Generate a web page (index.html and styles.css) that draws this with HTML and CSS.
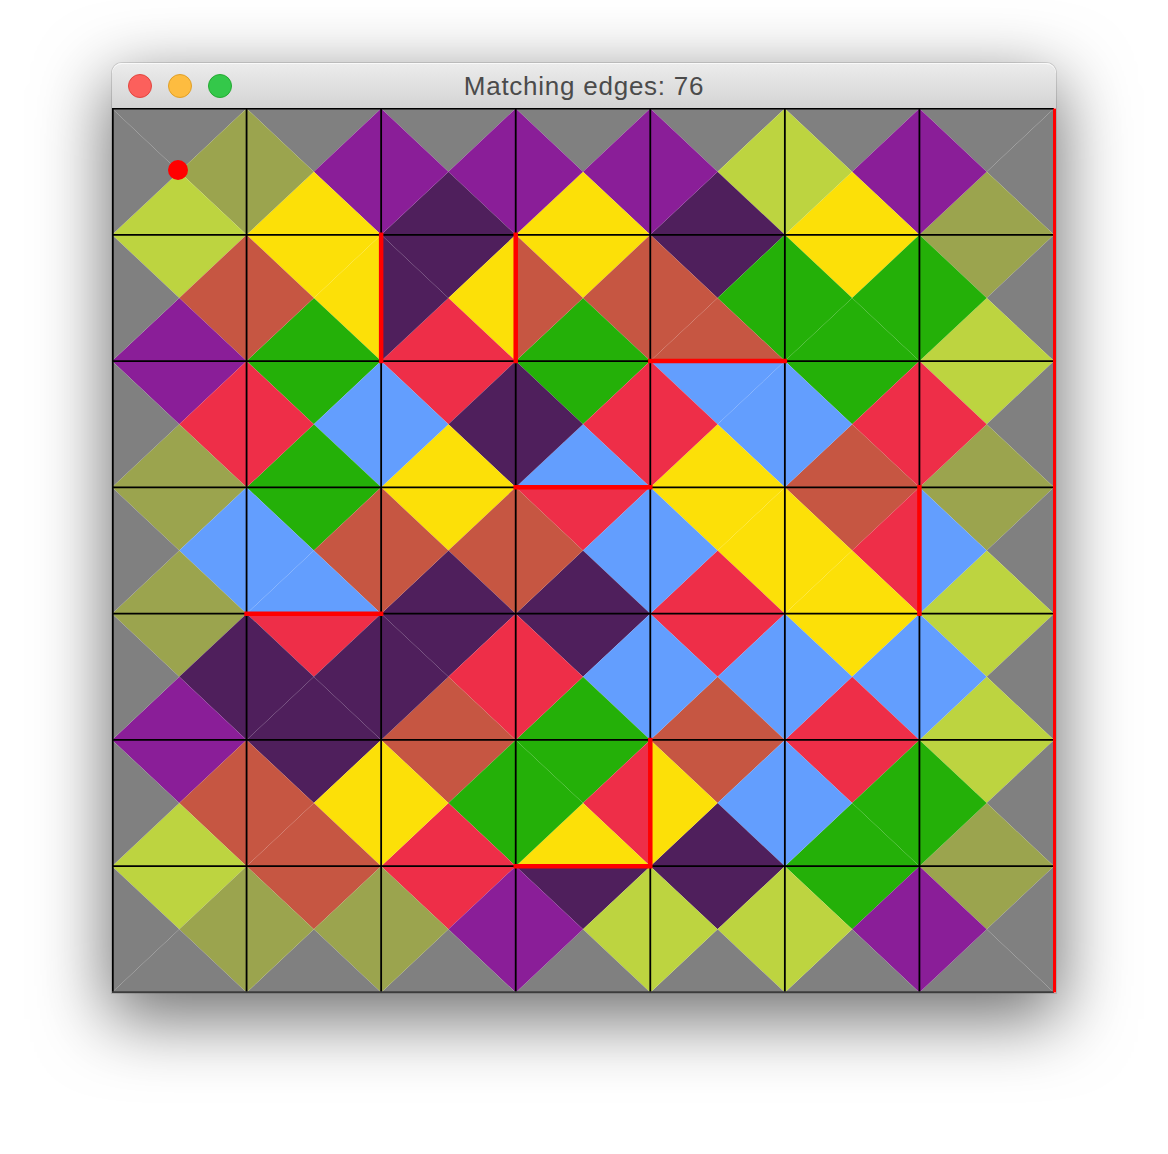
FILE: index.html
```html
<!DOCTYPE html>
<html>
<head>
<meta charset="utf-8">
<title>Matching edges: 76</title>
<link rel="stylesheet" href="styles.css">
</head>
<body>
<div class="stage">
  <div class="window">
    <div class="titlebar">
      <div class="lights">
        <span class="light close"></span>
        <span class="light min"></span>
        <span class="light max"></span>
      </div>
      <div class="title">Matching edges: 76</div>
      <div class="spacer"></div>
    </div>
    <svg class="board" width="944" height="885" viewBox="0 0 944 885">
      <defs>
        <polygon id="tT" points="0,0 134.571,0 67.286,63.143"/>
        <polygon id="tR" points="134.571,0 134.571,126.286 67.286,63.143"/>
        <polygon id="tB" points="0,126.286 134.571,126.286 67.286,63.143"/>
        <polygon id="tL" points="0,0 0,126.286 67.286,63.143"/>
      </defs>
      <g transform="translate(0 0.5)">
        <!-- row 0 -->
        <g transform="translate(0 0)"><use href="#tT" class="gy"/><use href="#tR" class="ol"/><use href="#tB" class="li"/><use href="#tL" class="gy"/></g>
        <g transform="translate(134.571 0)"><use href="#tT" class="gy"/><use href="#tR" class="pu"/><use href="#tB" class="ye"/><use href="#tL" class="ol"/></g>
        <g transform="translate(269.143 0)"><use href="#tT" class="gy"/><use href="#tR" class="pu"/><use href="#tB" class="dp"/><use href="#tL" class="pu"/></g>
        <g transform="translate(403.714 0)"><use href="#tT" class="gy"/><use href="#tR" class="pu"/><use href="#tB" class="ye"/><use href="#tL" class="pu"/></g>
        <g transform="translate(538.286 0)"><use href="#tT" class="gy"/><use href="#tR" class="li"/><use href="#tB" class="dp"/><use href="#tL" class="pu"/></g>
        <g transform="translate(672.857 0)"><use href="#tT" class="gy"/><use href="#tR" class="pu"/><use href="#tB" class="ye"/><use href="#tL" class="li"/></g>
        <g transform="translate(807.429 0)"><use href="#tT" class="gy"/><use href="#tR" class="gy"/><use href="#tB" class="ol"/><use href="#tL" class="pu"/></g>
        <!-- row 1 -->
        <g transform="translate(0 126.286)"><use href="#tT" class="li"/><use href="#tR" class="br"/><use href="#tB" class="pu"/><use href="#tL" class="gy"/></g>
        <g transform="translate(134.571 126.286)"><use href="#tT" class="ye"/><use href="#tR" class="ye"/><use href="#tB" class="gr"/><use href="#tL" class="br"/></g>
        <g transform="translate(269.143 126.286)"><use href="#tT" class="dp"/><use href="#tR" class="ye"/><use href="#tB" class="rd"/><use href="#tL" class="dp"/></g>
        <g transform="translate(403.714 126.286)"><use href="#tT" class="ye"/><use href="#tR" class="br"/><use href="#tB" class="gr"/><use href="#tL" class="br"/></g>
        <g transform="translate(538.286 126.286)"><use href="#tT" class="dp"/><use href="#tR" class="gr"/><use href="#tB" class="br"/><use href="#tL" class="br"/></g>
        <g transform="translate(672.857 126.286)"><use href="#tT" class="ye"/><use href="#tR" class="gr"/><use href="#tB" class="gr"/><use href="#tL" class="gr"/></g>
        <g transform="translate(807.429 126.286)"><use href="#tT" class="ol"/><use href="#tR" class="gy"/><use href="#tB" class="li"/><use href="#tL" class="gr"/></g>
        <!-- row 2 -->
        <g transform="translate(0 252.571)"><use href="#tT" class="pu"/><use href="#tR" class="rd"/><use href="#tB" class="ol"/><use href="#tL" class="gy"/></g>
        <g transform="translate(134.571 252.571)"><use href="#tT" class="gr"/><use href="#tR" class="bl"/><use href="#tB" class="gr"/><use href="#tL" class="rd"/></g>
        <g transform="translate(269.143 252.571)"><use href="#tT" class="rd"/><use href="#tR" class="dp"/><use href="#tB" class="ye"/><use href="#tL" class="bl"/></g>
        <g transform="translate(403.714 252.571)"><use href="#tT" class="gr"/><use href="#tR" class="rd"/><use href="#tB" class="bl"/><use href="#tL" class="dp"/></g>
        <g transform="translate(538.286 252.571)"><use href="#tT" class="bl"/><use href="#tR" class="bl"/><use href="#tB" class="ye"/><use href="#tL" class="rd"/></g>
        <g transform="translate(672.857 252.571)"><use href="#tT" class="gr"/><use href="#tR" class="rd"/><use href="#tB" class="br"/><use href="#tL" class="bl"/></g>
        <g transform="translate(807.429 252.571)"><use href="#tT" class="li"/><use href="#tR" class="gy"/><use href="#tB" class="ol"/><use href="#tL" class="rd"/></g>
        <!-- row 3 -->
        <g transform="translate(0 378.857)"><use href="#tT" class="ol"/><use href="#tR" class="bl"/><use href="#tB" class="ol"/><use href="#tL" class="gy"/></g>
        <g transform="translate(134.571 378.857)"><use href="#tT" class="gr"/><use href="#tR" class="br"/><use href="#tB" class="bl"/><use href="#tL" class="bl"/></g>
        <g transform="translate(269.143 378.857)"><use href="#tT" class="ye"/><use href="#tR" class="br"/><use href="#tB" class="dp"/><use href="#tL" class="br"/></g>
        <g transform="translate(403.714 378.857)"><use href="#tT" class="rd"/><use href="#tR" class="bl"/><use href="#tB" class="dp"/><use href="#tL" class="br"/></g>
        <g transform="translate(538.286 378.857)"><use href="#tT" class="ye"/><use href="#tR" class="ye"/><use href="#tB" class="rd"/><use href="#tL" class="bl"/></g>
        <g transform="translate(672.857 378.857)"><use href="#tT" class="br"/><use href="#tR" class="rd"/><use href="#tB" class="ye"/><use href="#tL" class="ye"/></g>
        <g transform="translate(807.429 378.857)"><use href="#tT" class="ol"/><use href="#tR" class="gy"/><use href="#tB" class="li"/><use href="#tL" class="bl"/></g>
        <!-- row 4 -->
        <g transform="translate(0 505.143)"><use href="#tT" class="ol"/><use href="#tR" class="dp"/><use href="#tB" class="pu"/><use href="#tL" class="gy"/></g>
        <g transform="translate(134.571 505.143)"><use href="#tT" class="rd"/><use href="#tR" class="dp"/><use href="#tB" class="dp"/><use href="#tL" class="dp"/></g>
        <g transform="translate(269.143 505.143)"><use href="#tT" class="dp"/><use href="#tR" class="rd"/><use href="#tB" class="br"/><use href="#tL" class="dp"/></g>
        <g transform="translate(403.714 505.143)"><use href="#tT" class="dp"/><use href="#tR" class="bl"/><use href="#tB" class="gr"/><use href="#tL" class="rd"/></g>
        <g transform="translate(538.286 505.143)"><use href="#tT" class="rd"/><use href="#tR" class="bl"/><use href="#tB" class="br"/><use href="#tL" class="bl"/></g>
        <g transform="translate(672.857 505.143)"><use href="#tT" class="ye"/><use href="#tR" class="bl"/><use href="#tB" class="rd"/><use href="#tL" class="bl"/></g>
        <g transform="translate(807.429 505.143)"><use href="#tT" class="li"/><use href="#tR" class="gy"/><use href="#tB" class="li"/><use href="#tL" class="bl"/></g>
        <!-- row 5 -->
        <g transform="translate(0 631.429)"><use href="#tT" class="pu"/><use href="#tR" class="br"/><use href="#tB" class="li"/><use href="#tL" class="gy"/></g>
        <g transform="translate(134.571 631.429)"><use href="#tT" class="dp"/><use href="#tR" class="ye"/><use href="#tB" class="br"/><use href="#tL" class="br"/></g>
        <g transform="translate(269.143 631.429)"><use href="#tT" class="br"/><use href="#tR" class="gr"/><use href="#tB" class="rd"/><use href="#tL" class="ye"/></g>
        <g transform="translate(403.714 631.429)"><use href="#tT" class="gr"/><use href="#tR" class="rd"/><use href="#tB" class="ye"/><use href="#tL" class="gr"/></g>
        <g transform="translate(538.286 631.429)"><use href="#tT" class="br"/><use href="#tR" class="bl"/><use href="#tB" class="dp"/><use href="#tL" class="ye"/></g>
        <g transform="translate(672.857 631.429)"><use href="#tT" class="rd"/><use href="#tR" class="gr"/><use href="#tB" class="gr"/><use href="#tL" class="bl"/></g>
        <g transform="translate(807.429 631.429)"><use href="#tT" class="li"/><use href="#tR" class="gy"/><use href="#tB" class="ol"/><use href="#tL" class="gr"/></g>
        <!-- row 6 -->
        <g transform="translate(0 757.714)"><use href="#tT" class="li"/><use href="#tR" class="ol"/><use href="#tB" class="gy"/><use href="#tL" class="gy"/></g>
        <g transform="translate(134.571 757.714)"><use href="#tT" class="br"/><use href="#tR" class="ol"/><use href="#tB" class="gy"/><use href="#tL" class="ol"/></g>
        <g transform="translate(269.143 757.714)"><use href="#tT" class="rd"/><use href="#tR" class="pu"/><use href="#tB" class="gy"/><use href="#tL" class="ol"/></g>
        <g transform="translate(403.714 757.714)"><use href="#tT" class="dp"/><use href="#tR" class="li"/><use href="#tB" class="gy"/><use href="#tL" class="pu"/></g>
        <g transform="translate(538.286 757.714)"><use href="#tT" class="dp"/><use href="#tR" class="li"/><use href="#tB" class="gy"/><use href="#tL" class="li"/></g>
        <g transform="translate(672.857 757.714)"><use href="#tT" class="gr"/><use href="#tR" class="pu"/><use href="#tB" class="gy"/><use href="#tL" class="li"/></g>
        <g transform="translate(807.429 757.714)"><use href="#tT" class="ol"/><use href="#tR" class="gy"/><use href="#tB" class="gy"/><use href="#tL" class="pu"/></g>

        <path class="gridlines" d="M0.8 0V884 M134.571 0V884 M269.143 0V884 M403.714 0V884 M538.286 0V884 M672.857 0V884 M807.429 0V884 M0 0H942 M0 126.286H942 M0 252.571H942 M0 378.857H942 M0 505.143H942 M0 631.429H942 M0 757.714H942"/>
        <path class="bottomline" d="M0 883.6H942"/>
        <path class="mismatch" d="M269.143 126.286V252.571 M403.714 126.286V252.571 M538.286 252.571H672.857 M403.714 378.857H538.286 M807.429 378.857V505.143 M134.571 505.143H269.143 M538.286 631.429V757.714 M403.714 757.714H538.286"/>
        <path class="edge" d="M942.5 0V884"/>
        <circle class="cursor" cx="66" cy="61.5" r="10"/>
      </g>
    </svg>
  </div>
</div>
</body>
</html>
```
FILE: styles.css
```css
html, body {
  margin: 0;
  padding: 0;
  background: #ffffff;
}

.stage {
  padding: 63px 0 0 112px;
  width: 1168px;
  height: 1154px;
  box-sizing: border-box;
  overflow: hidden;
}

.window {
  width: 944px;
  height: 930px;
  border-radius: 10px 10px 0 0;
  background: #ffffff;
  box-shadow: 0 22px 70px 4px rgba(0, 0, 0, 0.56), 0 0 0 1px rgba(0, 0, 0, 0.12);
  display: flex;
  flex-direction: column;
}

.titlebar {
  height: 45px;
  flex: 0 0 45px;
  display: grid;
  grid-template-columns: 1fr auto 1fr;
  align-items: center;
  background: linear-gradient(#ececec, #d4d4d4);
  border-radius: 10px 10px 0 0;
  box-shadow: inset 0 1px 0 rgba(255, 255, 255, 0.7);
}

.lights {
  display: flex;
  gap: 16px;
  padding-left: 16px;
  padding-top: 1px;
}

.light {
  width: 24px;
  height: 24px;
  border-radius: 50%;
  box-sizing: border-box;
}

.light.close {
  background: #fc605c;
  border: 1px solid #e2463f;
}

.light.min {
  background: #fdbc40;
  border: 1px solid #e0a028;
}

.light.max {
  background: #34c84a;
  border: 1px solid #25aa33;
}

.title {
  font-family: "Liberation Sans", Arial, sans-serif;
  font-size: 26px;
  letter-spacing: 0.75px;
  color: #4b4b4b;
  padding-top: 1px;
}

.board {
  display: block;
}

.gy { fill: #808080; }
.ol { fill: #9ba44e; }
.li { fill: #bdd440; }
.pu { fill: #8a1e98; }
.dp { fill: #4f1f5c; }
.ye { fill: #fce008; }
.br { fill: #c65642; }
.gr { fill: #24b008; }
.bl { fill: #639efe; }
.rd { fill: #ee2e48; }

.gridlines {
  fill: none;
  stroke: #000000;
  stroke-width: 1.8;
}

.bottomline {
  fill: none;
  stroke: #3c3c3c;
  stroke-width: 1.6;
}

.mismatch {
  fill: none;
  stroke: #ff0000;
  stroke-width: 4.5;
  stroke-linecap: square;
}

.edge {
  fill: none;
  stroke: #ff0000;
  stroke-width: 3;
}

.cursor {
  fill: #ff0000;
}
```
